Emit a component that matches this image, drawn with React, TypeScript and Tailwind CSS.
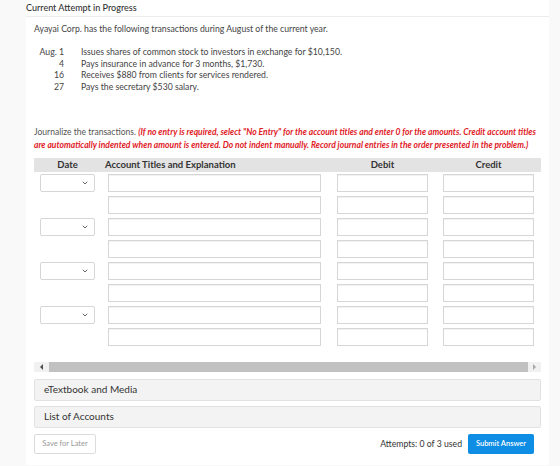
import { ChevronDown } from "lucide-react";

const transactions = [
  { date: "Aug. 1", text: "Issues shares of common stock to investors in exchange for $10,150." },
  { date: "4", text: "Pays insurance in advance for 3 months, $1,730." },
  { date: "16", text: "Receives $880 from clients for services rendered." },
  { date: "27", text: "Pays the secretary $530 salary." },
];

const Box = ({ className = "" }: { className?: string }) => (
  <div
    className={`h-[18px] border border-[#d6d6d6] bg-white shadow-[inset_0_1px_1px_rgba(0,0,0,0.06)] ${className}`}
  />
);

const JournalRow = ({ first }: { first: boolean }) => (
  <div className="grid grid-cols-[67px_228px_107px_105px] items-center">
    <div className="pl-[6px]">
      {first && (
        <div className="flex h-[18px] w-[55px] items-center justify-end rounded-[2px] border border-[#d6d6d6] bg-white pr-[5px]">
          <ChevronDown size={8} strokeWidth={3} className="text-[#666]" />
        </div>
      )}
    </div>
    <div className="pl-[7px] pr-[8px]">
      <Box />
    </div>
    <div className="pl-[8px] pr-[8px]">
      <Box />
    </div>
    <div className="pl-[7px] pr-[7px]">
      <Box />
    </div>
  </div>
);

export default function App() {
  const rows = [true, false, true, false, true, false, true, false];

  return (
    <div className="min-h-[466px] w-[560px] bg-[#f9f9f9] font-['Lato','Open_Sans',sans-serif] text-[#333]">
      <div className="ml-[26px] h-[465px] w-[523px] bg-white">
        <div className="h-[17px] border-b border-[#ececec] text-[9px] font-medium leading-[15px] text-[#333]">
          Current Attempt in Progress
        </div>

        <div className="px-[8px]">
          <p className="mt-[6px] text-[8.7px] leading-[12px] text-[#444]">
            Ayayai Corp. has the following transactions during August of the current year.
          </p>

          <div className="mt-[11px] flex flex-col text-[8.7px] leading-[11.7px] text-[#444]">
            {transactions.map((t) => (
              <div key={t.date} className="flex">
                <span className="w-[30px] text-right">{t.date}</span>
                <span className="ml-[17px]">{t.text}</span>
              </div>
            ))}
          </div>

          <p className="mt-[33px] text-[8.55px] leading-[13px] text-[#555]">
            Journalize the transactions.{" "}
            <span className="font-bold italic text-[#e0201f]">
              (If no entry is required, select "No Entry" for the account titles and enter 0 for the amounts. Credit account titles
              <br />
              are automatically indented when amount is entered. Do not indent manually. Record journal entries in the order presented in the problem.)
            </span>
          </p>

          <div className="mt-[6px] grid h-[14px] grid-cols-[67px_228px_107px_105px] items-center bg-[#e3e3e3] text-[9.5px] font-bold leading-[14px] text-[#333]">
            <div className="text-center">Date</div>
            <div className="pl-[4px]">Account Titles and Explanation</div>
            <div className="text-center">Debit</div>
            <div className="text-center">Credit</div>
          </div>

          <div className="mt-[2px] flex flex-col gap-[4px]">
            {rows.map((first, i) => (
              <JournalRow key={i} first={first} />
            ))}
          </div>

          <div className="mt-[16px] flex h-[10px] items-center bg-[#f1f1f1]">
            <div className="flex w-[15px] justify-center">
              <div className="h-0 w-0 border-y-[3px] border-r-[3px] border-y-transparent border-r-[#505050]" />
            </div>
            <div className="h-[10px] flex-1 bg-[#c1c1c1]" />
            <div className="flex w-[13px] justify-center">
              <div className="h-0 w-0 border-y-[3px] border-l-[3px] border-y-transparent border-l-[#a8a8a8]" />
            </div>
          </div>

          <div className="mt-[7px] flex flex-col gap-[5px]">
            <div className="flex h-[22px] items-center rounded-[2px] border border-[#e2e2e2] bg-[#f3f3f3] pl-[9px] text-[10px] text-[#333]">
              eTextbook and Media
            </div>
            <div className="flex h-[22px] items-center rounded-[2px] border border-[#e2e2e2] bg-[#f3f3f3] pl-[9px] text-[10px] text-[#333]">
              List of Accounts
            </div>
          </div>

          <div className="mt-[6px] flex items-center justify-between">
            <button className="flex h-[20px] w-[62px] items-center justify-center rounded-[2px] border border-[#dcdcdc] bg-white text-[7.5px] text-[#999]">
              Save for Later
            </button>
            <div className="flex items-center gap-[6px] pr-[7px]">
              <span className="text-[8.7px] text-[#333]">Attempts: 0 of 3 used</span>
              <button className="flex h-[20px] w-[66px] items-center justify-center rounded-[2px] bg-[#0d8de3] text-[7.5px] font-semibold text-white">
                Submit Answer
              </button>
            </div>
          </div>
        </div>
      </div>
    </div>
  );
}
